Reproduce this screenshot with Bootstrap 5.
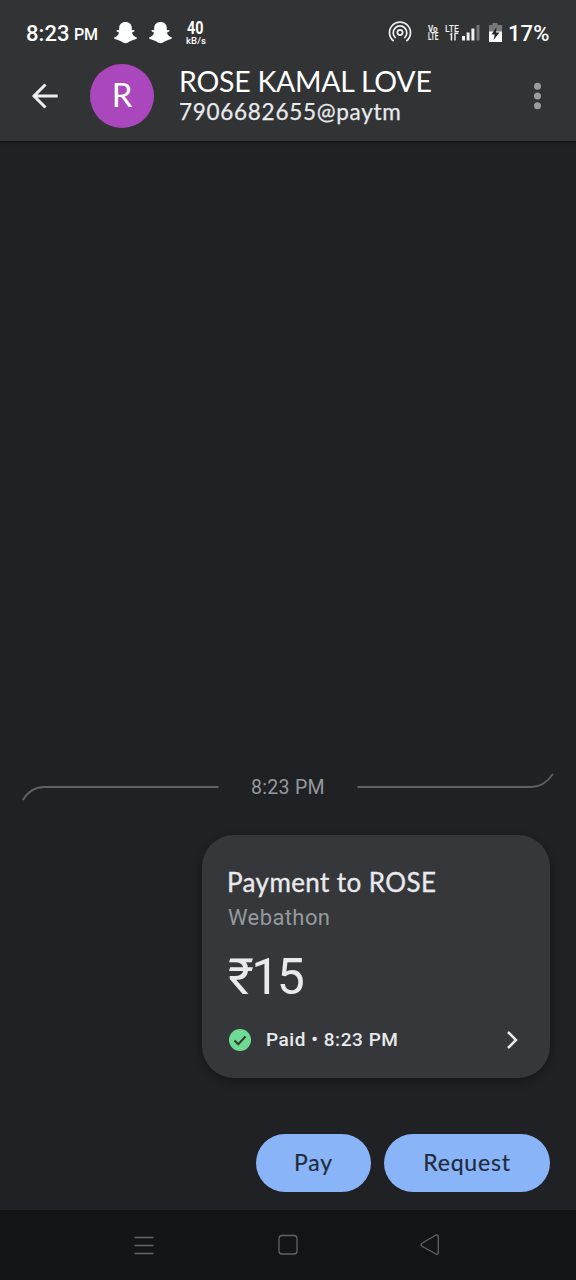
<!DOCTYPE html>
<html lang="en">
<head>
<meta charset="utf-8">
<meta name="viewport" content="width=device-width, initial-scale=1">
<title>Payment to ROSE</title>
<link href="https://cdn.jsdelivr.net/npm/bootstrap@5.3.0/dist/css/bootstrap.min.css" rel="stylesheet">
<style>
body{background:#202124;color:#e8eaed;font-family:Roboto,"Liberation Sans",sans-serif}
svg{display:block;flex:none}
.gs{font-family:Lato,"Open Sans",sans-serif}
.app-top{height:140.500px;background:#323335;box-shadow:0 1px 3px rgba(0,0,0,.45)}
.status{height:64px;padding:2px 26px 0;color:#fff;font-weight:500}
.clock{font-size:22px;line-height:26px;letter-spacing:.1px;width:48px;padding-top:1px}
.ampm{font-size:16px;line-height:26px;width:40px;padding-top:4px;letter-spacing:-.3px}
.pct{font-size:22px;line-height:26px;width:42px;letter-spacing:.1px;padding-top:1px}
.appbar{height:64px;padding:0 32px 0 30px}
.avatar{width:64px;height:64px;margin-left:30px;background:#ab47bc;color:#fff;font-size:33px;line-height:1;padding-bottom:3px}
.who{margin:-2px 0 0 26px}
.who-name{font-size:28.5px;line-height:33px;color:#fff;letter-spacing:-.25px;margin-left:-1px}
.who-id{font-size:22.5px;line-height:28px;letter-spacing:.72px;-webkit-text-stroke:.25px #e8eaed;margin-left:-1px}
.stamp{color:#96999d;font-size:19.5px;line-height:28px;letter-spacing:.3px}
.divider-row{padding:0 22px;height:30px;margin-bottom:34px}
.pay-card{width:348px;height:243px;margin-right:26px;border-radius:32px;background:#36373a;padding:31px 26px 0;box-shadow:0 3px 8px rgba(0,0,0,.35)}
.pay-title{font-size:26px;line-height:33px;letter-spacing:.4px;-webkit-text-stroke:.35px #e8eaed;margin-left:-1px}
.pay-note{font-size:22px;line-height:30px;margin-top:4px;color:#96999d;letter-spacing:.4px}
.amount{font-size:50px;line-height:60px;margin-top:14px;letter-spacing:-2.6px}
.paid{font-size:19px;line-height:26px;font-weight:500;letter-spacing:.55px;margin-left:14px}
.actions{gap:13px;padding:0 26px;margin:56px 0 18px}
.pill{height:58px;background:#8ab4f8;color:#202b3b;font-size:23px;letter-spacing:.8px;padding:0 0 2px;-webkit-text-stroke:.2px #202b3b}
.pill:hover{background:#9cc0fa}
.navkeys{height:70px;background:#131416}
</style>
</head>
<body class="vh-100 d-flex flex-column overflow-hidden">
<header class="app-top flex-shrink-0">
  <div class="status d-flex align-items-center">
    <span class="clock">8:23</span><span class="ampm">PM</span>
    <svg width="23" height="22" viewBox="0 0 23 22" fill="#fff"><path id="ghost" d="M11.500 0C7.600 0 5.200 2.500 5.200 6v2.200L3.200 8c-.9.1-1 1-.2 1.500l2.100 1.200C4.300 13.400 2.500 14.700.5 15.300c-.7.4-.5 1.300.4 1.700l3 .9c1.300.3 2.500.9 3.600 1.700 1.300 1 2.600 1.600 4 1.600s2.700-.6 4-1.600c1.100-.8 2.300-1.400 3.600-1.700l3-.9c.9-.4 1.100-1.300.4-1.700-2-.6-3.800-1.900-4.600-4.600L20 9.500c.8-.5.7-1.400-.2-1.500l-2 .2V6c0-3.500-2.400-6-6.300-6z"/></svg>
    <svg style="margin-left:12px" width="23" height="22" viewBox="0 0 23 22" fill="#fff"><use href="#ghost"/></svg>
    <svg style="margin-left:13px" width="23" height="28" fill="#fff" font-family="Roboto,sans-serif" font-weight="700"><text transform="translate(2 15) scale(.82 1)" font-size="17.500">40</text><text x="1" y="25" font-size="9.500" font-weight="500" textLength="20">kB/s</text></svg>
    <svg class="ms-auto" width="24" height="26" fill="none" stroke="#f1f1f1" stroke-width="1.700"><circle cx="12" cy="12.500" r="2.600"/><path d="M7.700 18A6.800 6.800 0 1 1 16.300 18M5.700 21A10.500 10.500 0 1 1 18.300 21"/></svg>
    <svg style="margin-left:15px" width="55" height="22" fill="#f1f1f1" font-family="Roboto,sans-serif" font-weight="700"><text transform="translate(1 9.500) scale(.9 1)" font-size="9">Vo</text><text transform="translate(1 18.200) scale(.65 1)" font-size="10">LTE</text><text transform="translate(18 9.500) scale(.92 1)" font-size="9.500" font-weight="500">LTE</text><path d="M22 13l3.200-3v8.500h-1.500v-6zM27.300 10.500h1.400v8h-1.400zM28.700 10.500h2.600v1.500h-2.600z"/><path d="M35 14h3v4.500h-3zM39.600 10.500h3v8h-3zM44.400 6.500h3v12h-3z"/><path fill="#737476" d="M49.500 3h3v15.500h-3z"/></svg>
    <svg style="margin-left:6px" width="15" height="22"><path fill="#77787a" d="M4.500 1h5v2H14v9H1V3h3.500z"/><path fill="#fff" d="M1 9.500h13V20H1z"/><path fill="#242527" d="M8.500 5L3.500 12.500h3.200L5.500 18 11.500 10.500H8z"/></svg>
    <span class="pct" style="margin-left:5px">17%</span>
  </div>
  <div class="appbar d-flex align-items-center">
    <svg width="30" height="28" fill="none" stroke="#eee" stroke-width="3"><path d="M27.700 14H4M15.500 2.500L4 14l11.500 11.500"/></svg>
    <div class="avatar gs rounded-circle d-flex align-items-center justify-content-center">R</div>
    <div class="who gs text-nowrap"><div class="who-name">ROSE KAMAL LOVE</div><div class="who-id">7906682655@paytm</div></div>
    <svg class="ms-auto" width="13" height="28" fill="#9b9c9e"><circle cx="6.500" cy="4.300" r="3.500"/><circle cx="6.500" cy="14" r="3.500"/><circle cx="6.500" cy="23.700" r="3.500"/></svg>
  </div>
</header>
<main class="flex-grow-1 d-flex flex-column justify-content-end">
  <div class="divider-row d-flex align-items-center justify-content-between">
    <svg width="197" height="30" fill="none" stroke="#5f6165" stroke-width="1.800"><path d="M.8 29Q9 16 22 16H196.500"/></svg>
    <span class="stamp pt-1">8:23 PM</span>
    <svg width="197" height="30" fill="none" stroke="#5f6165" stroke-width="1.800"><path d="M.5 16H174Q187 16 196 3"/></svg>
  </div>
  <section class="pay-card align-self-end text-nowrap">
    <div class="pay-title gs">Payment to ROSE</div>
    <div class="pay-note">Webathon</div>
    <div class="amount">₹15</div>
    <div class="d-flex align-items-center" style="margin-top:20px">
      <svg width="24" height="24"><circle cx="12" cy="12" r="11" fill="#6ddb91"/><path d="M6.500 12.500l3.800 3.700L17.500 8.500" fill="none" stroke="#303b35" stroke-width="2"/></svg>
      <span class="paid">Paid • 8:23 PM</span>
      <svg class="ms-auto" width="20" height="20" fill="none" stroke="#e8eaed" stroke-width="2.500"><path d="M4 2l8 8-8 8"/></svg>
    </div>
  </section>
  <div class="actions d-flex justify-content-end">
    <button class="btn pill gs rounded-pill" style="width:115px">Pay</button>
    <button class="btn pill gs rounded-pill" style="width:166px">Request</button>
  </div>
</main>
<nav class="navkeys flex-shrink-0">
  <svg width="576" height="70" fill="none" stroke="#626365" stroke-width="1.300"><path d="M134.500 27.500h19M134.500 35.500h19M134.500 43.500h19"/><rect x="279" y="25.500" width="18" height="18.500" rx="3"/><path d="M422 33.200L435.500 25.300Q438.300 24 438.300 27V42Q438.300 45.500 435.500 43.800L422 36.200Q420 34.700 422 33.200z"/></svg>
</nav>
<script src="https://cdn.jsdelivr.net/npm/bootstrap@5.3.0/dist/js/bootstrap.bundle.min.js"></script>
</body>
</html>
